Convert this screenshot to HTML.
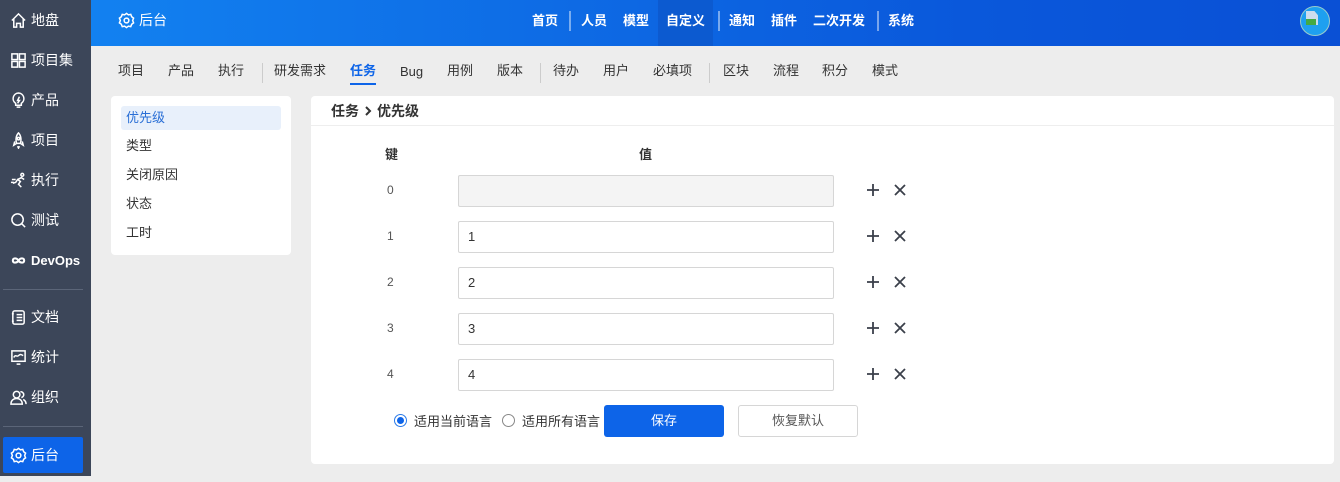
<!DOCTYPE html>
<html><head><meta charset="utf-8"><style>
*{box-sizing:border-box;margin:0;padding:0}
body{width:1340px;height:476px;overflow:hidden;background:#ededed;font-family:"Liberation Sans","Noto Sans CJK SC",sans-serif;font-size:13px;color:#333;position:relative}
.side{position:absolute;left:0;top:0;width:91px;height:476px;background:#3c4659}
.si{position:absolute;left:10px;height:24px;display:flex;align-items:center;color:#fff;font-size:14px;font-weight:normal}
.si svg{width:17px;height:17px;margin-right:4px;fill:none;stroke:#fff;stroke-width:1.6}
.div{position:absolute;left:3px;width:80px;height:1px;background:#5b6578}
.top{position:absolute;left:91px;top:0;width:1249px;height:46px;background:linear-gradient(90deg,#1281f0,#0a58db 70%,#0a50d5)}
.tn{position:absolute;top:0;height:46px;line-height:41px;color:#fff;font-size:13px;font-weight:bold}
.tsep{position:absolute;top:11px;width:2px;height:20px;background:rgba(255,255,255,.45)}
.sub{position:absolute;top:62px;font-size:13px;color:#333;line-height:18px;height:18px}
.ssep{position:absolute;top:63px;width:1px;height:20px;background:#ccc}
.panel{position:absolute;background:#fff;border-radius:4px}
.li{position:absolute;left:10px;width:160px;height:24px;line-height:24px;padding-left:5px;font-size:13px;color:#333}
.inp{position:absolute;left:147px;width:376px;height:32px;border:1px solid #d6d6d6;border-radius:2px;padding-left:9px;line-height:30px;font-size:13px;color:#333}
.key{position:absolute;left:76px;font-size:12px;color:#555;line-height:16px}
</style></head><body>
<div class="side">
 <div class="si" style="top:8px"><svg viewBox="0 0 18 18"><path d="M2 9L9 2l7 7M4 7v9h3v-4h4v4h3V7"/></svg>地盘</div>
 <div class="si" style="top:48px"><svg viewBox="0 0 18 18"><rect x="2" y="2" width="6" height="6"/><rect x="10" y="2" width="6" height="6"/><rect x="2" y="10" width="6" height="6"/><rect x="10" y="10" width="6" height="6"/></svg>项目集</div>
 <div class="si" style="top:88px"><svg viewBox="0 0 18 18"><path d="M9 1a6 6 0 0 0-3 11v2h6v-2A6 6 0 0 0 9 1zM7 16h4M10 5l-2 4h2l-2 3"/></svg>产品</div>
 <div class="si" style="top:128px"><svg viewBox="0 0 18 18"><path d="M9 1c3 3 3 8 2 11H7C6 9 6 4 9 1zM7 12l-3 2 1-4M11 12l3 2-1-4M8 15l1 2 1-2"/><circle cx="9" cy="7" r="1.3"/></svg>项目</div>
 <div class="si" style="top:168px"><svg viewBox="0 0 18 18"><path d="M3 12l3-1 2-3 3 2-2 3 3 3M8 8l4-2 3 2M2 8h4M1 11h3"/><circle cx="13" cy="3" r="1.5"/></svg>执行</div>
 <div class="si" style="top:208px"><svg viewBox="0 0 18 18"><circle cx="8" cy="8" r="6"/><path d="M12 12l4 4"/></svg>测试</div>
 <div class="si" style="top:248px;font-weight:bold;font-size:13px"><svg viewBox="0 0 18 18" style="stroke-width:2.2"><path d="M9 9c-2-3-6-3-6 0s4 3 6 0 6-3 6 0-4 3-6 0"/></svg>DevOps</div>
 <div class="div" style="top:289px"></div>
 <div class="si" style="top:305px"><svg viewBox="0 0 18 18"><rect x="3" y="2" width="12" height="14" rx="2"/><path d="M7 6h6M7 9h6M7 12h6M2 5h2M2 13h2"/></svg>文档</div>
 <div class="si" style="top:345px"><svg viewBox="0 0 18 18"><rect x="2" y="2" width="14" height="11"/><path d="M4 9c2-4 3 0 5-2s3-1 5 0M7 16h4"/></svg>统计</div>
 <div class="si" style="top:385px"><svg viewBox="0 0 18 18"><circle cx="7" cy="6" r="3.5"/><path d="M1 16c0-4 3-6 6-6s6 2 6 6zM11 3a3 3 0 0 1 1 6M14 11c2 1 3 3 3 5"/></svg>组织</div>
 <div class="div" style="top:426px"></div>
 <div style="position:absolute;left:3px;top:437px;width:80px;height:36px;background:#0d64e8;border-radius:2px"></div>
 <div class="si" style="top:443px"><svg viewBox="0 0 18 18"><circle cx="9" cy="9" r="2.5"/><path d="M9 1.5l2 1.5 2.5-.5 1 2.5 2 1.5-1 2.5 1 2.5-2 1.5-1 2.5-2.5-.5-2 1.5-2-1.5-2.5.5-1-2.5-2-1.5 1-2.5-1-2.5 2-1.5 1-2.5 2.5.5z"/></svg>后台</div>
</div>
<div class="top">
 <div class="si" style="top:8px;left:27px"><svg viewBox="0 0 18 18"><circle cx="9" cy="9" r="2.5"/><path d="M9 1.5l2 1.5 2.5-.5 1 2.5 2 1.5-1 2.5 1 2.5-2 1.5-1 2.5-2.5-.5-2 1.5-2-1.5-2.5.5-1-2.5-2-1.5 1-2.5-1-2.5 2-1.5 1-2.5 2.5.5z"/></svg><span>后台</span></div>
 <div class="tn" style="left:441px">首页</div>
 <div class="tsep" style="left:478px"></div>
 <div class="tn" style="left:490px">人员</div>
 <div class="tn" style="left:532px">模型</div>
 <div style="position:absolute;left:567px;top:0;width:55px;height:46px;background:#0c5ad0"></div>
 <div class="tn" style="left:575px">自定义</div>
 <div class="tsep" style="left:627px"></div>
 <div class="tn" style="left:638px">通知</div>
 <div class="tn" style="left:680px">插件</div>
 <div class="tn" style="left:722px">二次开发</div>
 <div class="tsep" style="left:786px"></div>
 <div class="tn" style="left:797px">系统</div>
 <div style="position:absolute;left:1209px;top:6px;width:30px;height:30px;border-radius:50%;background:#1ea0f0;border:1px solid #9cc"><div style="position:absolute;left:5px;top:4px;width:12px;height:14px;background:#cde;clip-path:polygon(0 0,70% 0,100% 30%,100% 100%,0 100%)"></div><div style="position:absolute;left:5px;top:12px;width:10px;height:6px;background:#4a4"></div></div>
</div>
<div class="sub" style="left:118px">项目</div>
<div class="sub" style="left:168px">产品</div>
<div class="sub" style="left:218px">执行</div>
<div class="ssep" style="left:262px"></div>
<div class="sub" style="left:274px">研发需求</div>
<div class="sub" style="left:350px;color:#0d64e8;font-weight:bold">任务</div>
<div style="position:absolute;left:350px;top:83px;width:26px;height:2px;background:#0d64e8"></div>
<div class="sub" style="left:400px;top:63px">Bug</div>
<div class="sub" style="left:447px">用例</div>
<div class="sub" style="left:497px">版本</div>
<div class="ssep" style="left:540px"></div>
<div class="sub" style="left:553px">待办</div>
<div class="sub" style="left:603px">用户</div>
<div class="sub" style="left:653px">必填项</div>
<div class="ssep" style="left:709px"></div>
<div class="sub" style="left:723px">区块</div>
<div class="sub" style="left:773px">流程</div>
<div class="sub" style="left:822px">积分</div>
<div class="sub" style="left:872px">模式</div>

<div class="panel" style="left:111px;top:96px;width:180px;height:159px">
 <div class="li" style="top:10px;background:#e8f0fb;color:#2a6fd6;border-radius:3px">优先级</div>
 <div class="li" style="top:38px">类型</div>
 <div class="li" style="top:67px">关闭原因</div>
 <div class="li" style="top:96px">状态</div>
 <div class="li" style="top:125px">工时</div>
</div>
<div class="panel" style="left:311px;top:96px;width:1023px;height:368px">
 <div style="position:absolute;left:20px;top:5px;font-weight:bold;font-size:14px;color:#333;display:flex;align-items:center">任务<svg width="18" height="14" viewBox="0 0 18 14"><path d="M7 3l4 4-4 4" stroke="#333" stroke-width="2" fill="none"/></svg>优先级</div>
 <div style="position:absolute;left:0;top:29px;width:100%;height:1px;background:#eee"></div>
 <div style="position:absolute;left:74px;top:48px;font-weight:bold">键</div>
 <div style="position:absolute;left:328px;top:48px;font-weight:bold">值</div>
 <div class="key" style="top:86px">0</div><div class="inp" style="top:79px;background:#f4f4f4"></div>
 <div class="key" style="top:132px">1</div><div class="inp" style="top:125px">1</div>
 <div class="key" style="top:178px">2</div><div class="inp" style="top:171px">2</div>
 <div class="key" style="top:224px">3</div><div class="inp" style="top:217px">3</div>
 <div class="key" style="top:270px">4</div><div class="inp" style="top:263px">4</div>
 <svg style="position:absolute;left:555px;top:86px" width="46" height="300" stroke="#3a3f4a" stroke-width="1.8" fill="none">
  <g id="r"><path d="M1 8h12M7 2v12M29 3l10 10M39 3l-10 10"/></g>
  <use href="#r" y="46"/><use href="#r" y="92"/><use href="#r" y="138"/><use href="#r" y="184"/>
 </svg>
 <div style="position:absolute;left:83px;top:318px;width:13px;height:13px;border:1px solid #2a7ae8;border-radius:50%"><div style="margin:2px;width:7px;height:7px;border-radius:50%;background:#0d64e8"></div></div>
 <div style="position:absolute;left:103px;top:315px">适用当前语言</div>
 <div style="position:absolute;left:191px;top:318px;width:13px;height:13px;border:1px solid #888;border-radius:50%"></div>
 <div style="position:absolute;left:211px;top:315px">适用所有语言</div>
 <div style="position:absolute;left:293px;top:309px;width:120px;height:32px;background:#0d64e8;border-radius:3px;color:#fff;text-align:center;line-height:32px">保存</div>
 <div style="position:absolute;left:427px;top:309px;width:120px;height:32px;border:1px solid #d6d6d6;border-radius:3px;text-align:center;line-height:30px;color:#555">恢复默认</div>
</div>
</body></html>
